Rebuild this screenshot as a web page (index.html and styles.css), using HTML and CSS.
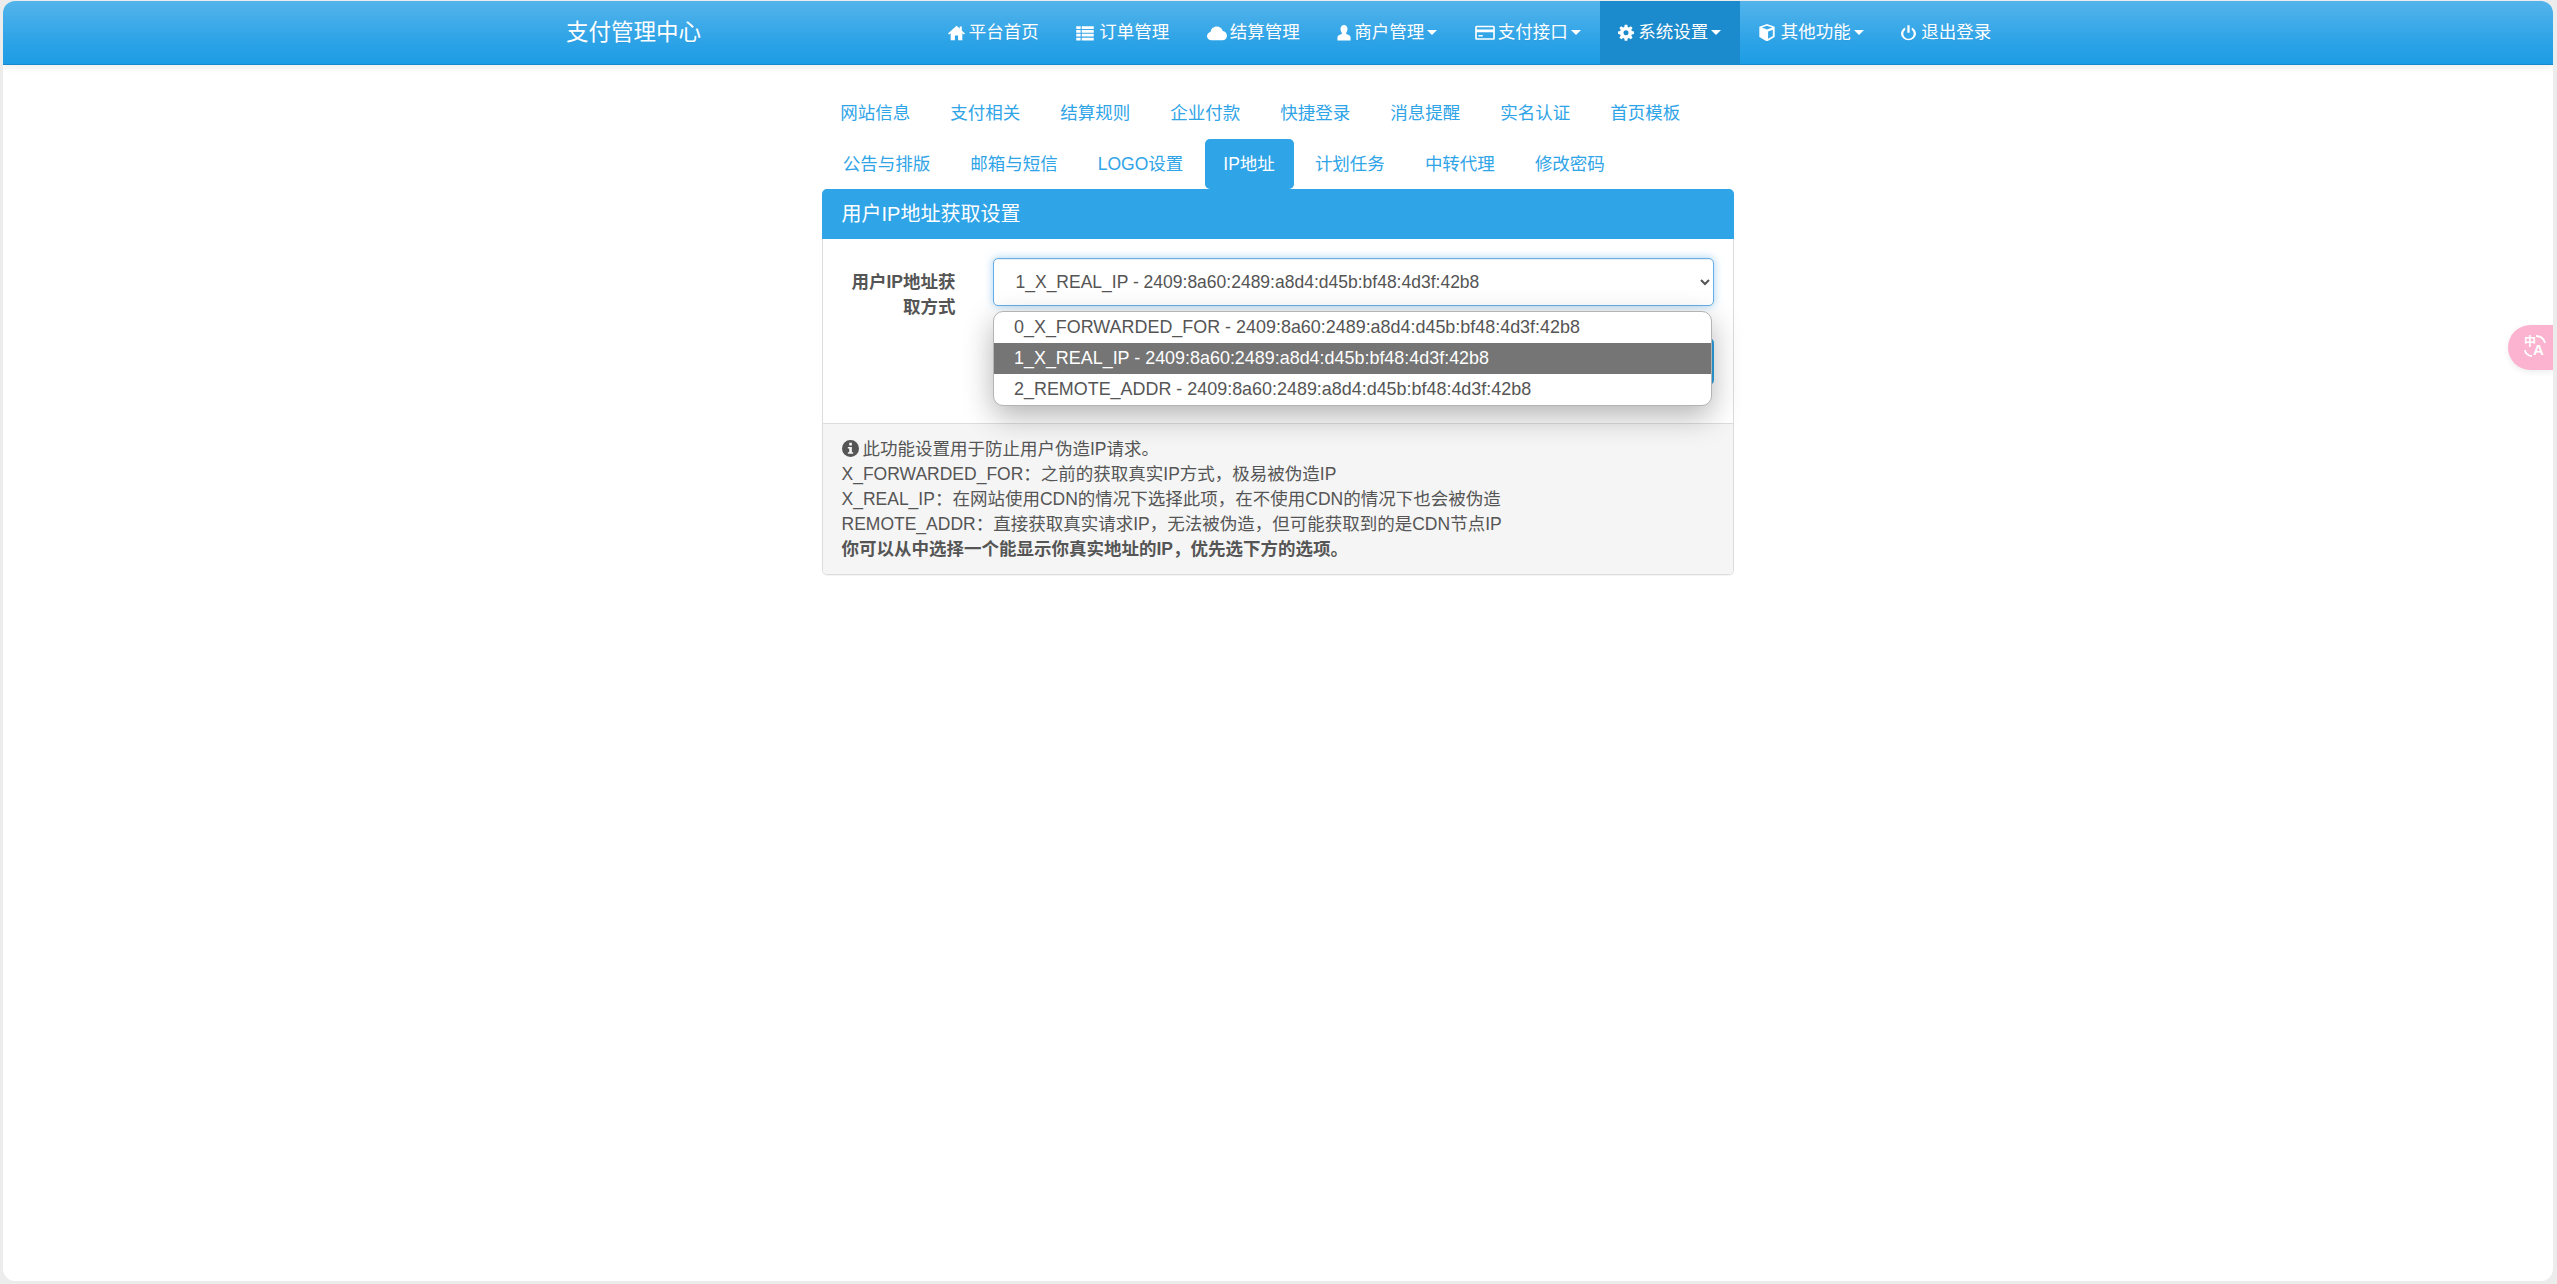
FILE: index.html
```html
<!DOCTYPE html>
<html lang="zh-CN">
<head>
    <meta charset="UTF-8">
    <title>支付管理中心</title>
    <link rel="stylesheet" href="styles.css">
</head>
<body>
    <div class="frame">
        <nav class="navbar">
            <a class="brand" href="#">支付管理中心</a>
            <ul class="nav">
                <li><a href="#"><svg class="ico ico-home" viewBox="0 0 16 16"><path d="M8 1.500 0 8.600l1 1.100L2.500 8.500V15h4v-4.500h3V15h4V8.500l1.500 1.200 1-1.100-3-2.700V2h-2v2.100z"/></svg>平台首页</a></li>
                <li><a href="#"><svg class="ico ico-list" viewBox="0 0 16 16"><path d="M0 2h4v2.500H0zM5 2h11v2.500H5zM0 5.500h4V8H0zM5 5.500h11V8H5zM0 9h4v2.500H0zM5 9h11v2.500H5zM0 12.500h4V15H0zM5 12.500h11V15H5z"/></svg>订单管理</a></li>
                <li><a href="#"><svg class="ico ico-cloud" viewBox="0 1 16 14"><path d="M3.500 14C1.500 14 0 12.500 0 10.600c0-1.700 1.200-3 2.800-3.300C3.100 4.800 5.200 3 7.800 3c2.300 0 4.200 1.400 4.800 3.500 1.900.2 3.400 1.800 3.400 3.800 0 2.100-1.600 3.700-3.700 3.700z"/></svg>结算管理</a></li>
                <li><a href="#"><svg class="ico ico-user" viewBox="0 0 12 16"><path d="M6 1c2 0 3.200 1.700 3.200 3.600 0 1.300-.5 2.500-1.200 3.300v1.300c1.800.6 4 1.500 4 2.900V15H0v-2.900c0-1.400 2.200-2.300 4-2.900V7.900c-.7-.8-1.200-2-1.200-3.300C2.800 2.700 4 1 6 1z"/></svg>商户管理<i class="caret"></i></a></li>
                <li><a href="#"><svg class="ico ico-card" viewBox="0 0 18 16"><path fill-rule="evenodd" d="M1.500 1.500h15c.8 0 1.500.7 1.500 1.500v10c0 .8-.7 1.500-1.500 1.500h-15C.7 14.500 0 13.800 0 13V3c0-.8.7-1.500 1.500-1.500zM1.500 3v2h15V3zm0 4.500V13h15V7.500zM3 10h4v1.500H3z"/></svg>支付接口<i class="caret"></i></a></li>
                <li class="active"><a href="#"><svg class="ico ico-cog" viewBox="0 0 16 16"><path fill-rule="evenodd" d="M6.700 0h2.600l.4 2.200 1.200.5 1.900-1.300 1.800 1.800-1.300 1.900.5 1.200 2.200.4v2.600l-2.200.4-.5 1.200 1.300 1.900-1.800 1.800-1.900-1.300-1.200.5-.4 2.200H6.700l-.4-2.200-1.200-.5-1.900 1.300-1.800-1.800 1.300-1.900-.5-1.200L0 9.300V6.700l2.200-.4.500-1.200-1.300-1.900 1.800-1.800 1.900 1.300 1.200-.5zM8 5.500a2.500 2.500 0 1 0 0 5 2.500 2.500 0 0 0 0-5z"/></svg>系统设置<i class="caret"></i></a></li>
                <li><a href="#"><svg class="ico ico-cube" viewBox="1 0 14 16"><path fill-rule="evenodd" d="M8 0l7 2.600v9.200L8 16l-7-4.200V2.600zM3.200 3.300 8 5.100l4.800-1.800L8 1.600zM9 6.800v6.700l4.300-2.600V5.200z"/></svg>其他功能<i class="caret"></i></a></li>
                <li><a href="#"><svg class="ico ico-power" viewBox="0 0 16 16"><path d="M6.800 0h2.400v8H6.800zM4.500 2.500v2.600C3.200 6 2.500 7.400 2.500 9a5.500 5.500 0 0 0 11 0c0-1.600-.7-3-2-3.900V2.500C14 3.600 16 6.100 16 9A8 7 0 0 1 0 9c0-2.900 2-5.400 4.500-6.500z"/></svg>退出登录</a></li>
            </ul>
        </nav>

        <main class="content">
            <ul class="pills">
                <li><a href="#">网站信息</a></li>
                <li><a href="#">支付相关</a></li>
                <li><a href="#">结算规则</a></li>
                <li><a href="#">企业付款</a></li>
                <li><a href="#">快捷登录</a></li>
                <li><a href="#">消息提醒</a></li>
                <li><a href="#">实名认证</a></li>
                <li><a href="#">首页模板</a></li>
                <li><a href="#">公告与排版</a></li>
                <li><a href="#">邮箱与短信</a></li>
                <li><a href="#">LOGO设置</a></li>
                <li class="active"><a href="#">IP地址</a></li>
                <li><a href="#">计划任务</a></li>
                <li><a href="#">中转代理</a></li>
                <li><a href="#">修改密码</a></li>
            </ul>

            <section class="panel">
                <h3 class="panel-heading">用户IP地址获取设置</h3>
                <div class="panel-body">
                    <form class="form-row">
                        <label class="form-label" for="ipType">用户IP地址获取方式</label>
                        <div class="form-field">
                            <select id="ipType" class="form-control">
                                <option>0_X_FORWARDED_FOR - 2409:8a60:2489:a8d4:d45b:bf48:4d3f:42b8</option>
                                <option selected>1_X_REAL_IP - 2409:8a60:2489:a8d4:d45b:bf48:4d3f:42b8</option>
                                <option>2_REMOTE_ADDR - 2409:8a60:2489:a8d4:d45b:bf48:4d3f:42b8</option>
                            </select>
                            <div class="btn-submit"></div>
                            <ul class="select-list">
                                <li>0_X_FORWARDED_FOR - 2409:8a60:2489:a8d4:d45b:bf48:4d3f:42b8</li>
                                <li class="selected">1_X_REAL_IP - 2409:8a60:2489:a8d4:d45b:bf48:4d3f:42b8</li>
                                <li>2_REMOTE_ADDR - 2409:8a60:2489:a8d4:d45b:bf48:4d3f:42b8</li>
                            </ul>
                        </div>
                    </form>
                </div>
                <div class="panel-footer">
                    <svg class="info-ico" viewBox="0 0 16 16"><path fill-rule="evenodd" d="M8 0a8 8 0 1 1 0 16A8 8 0 0 1 8 0zM6.800 2.500v2.600h2.500V2.500zM5.500 6.500v1.600h1.300v3.400H5.500V13h5v-1.500H9.300V6.500z"/></svg>此功能设置用于防止用户伪造IP请求。<br>
                    X_FORWARDED_FOR：之前的获取真实IP方式，极易被伪造IP<br>
                    X_REAL_IP：在网站使用CDN的情况下选择此项，在不使用CDN的情况下也会被伪造<br>
                    REMOTE_ADDR：直接获取真实请求IP，无法被伪造，但可能获取到的是CDN节点IP<br>
                    <b>你可以从中选择一个能显示你真实地址的IP，优先选下方的选项。</b>
                </div>
            </section>
        </main>

        <div class="translate-btn">
            <span class="translate-zh">中</span>
            <span class="translate-en">A</span>
            <svg class="translate-arc" viewBox="0 0 45 45"><path d="M28 11c5 0 8 3 9 7M17 25c0 3 3 6 7 6" fill="none" stroke="#fff" stroke-width="1.800"/></svg>
        </div>
    </div>
</body>
</html>
```

FILE: styles.css
```css
* {
    box-sizing: border-box;
}
html, body {
    height: 100%;
}
body {
    margin: 0;
    background-color: #ececec;
    font-family: "Liberation Sans", "Noto Sans CJK SC", sans-serif;
    font-size: 17.5px;
    line-height: 25px;
    color: #555;
}
a {
    text-decoration: none;
}
ul {
    list-style: none;
    margin: 0;
    padding: 0;
}
.frame {
    position: relative;
    height: 1280px;
    margin: 1px 4px 3px 3px;
    background-color: #fff;
    border-radius: 12px;
    overflow: hidden;
}
.navbar {
    display: flex;
    height: 64px;
    padding-left: 544px;
    background-image: linear-gradient(#54b4eb, #2fa4e7 60%, #1d9ce5);
    border-bottom: 1px solid #178acc;
    box-shadow: 0 2px 8px rgba(0, 0, 0, 0.08);
}
.brand {
    width: 382px;
    padding-left: 19px;
    font-size: 22.5px;
    line-height: 63px;
    color: #fff;
    text-shadow: 0 1px 0 rgba(0, 0, 0, 0.05);
}
.nav {
    display: flex;
}
.nav a {
    display: flex;
    align-items: center;
    height: 63px;
    padding: 0 18.75px;
    color: #fff;
    text-shadow: 0 1px 0 rgba(0, 0, 0, 0.05);
}
.nav .active a {
    background-color: #1b8bcd;
}
.ico {
    height: 17.5px;
    fill: #fff;
}
.ico-home {
    width: 17px;
    margin-right: 4px;
}
.ico-list {
    width: 18px;
    margin-right: 5px;
}
.ico-cloud {
    width: 20px;
    margin-right: 3px;
}
.ico-user {
    width: 14px;
    margin-right: 3px;
}
.ico-card {
    width: 20px;
    margin-right: 3px;
}
.ico-cog {
    width: 16px;
    margin-right: 4px;
}
.ico-cube {
    width: 16px;
    margin-right: 6px;
}
.ico-power {
    width: 15px;
    margin-right: 5px;
}
.caret {
    width: 0;
    height: 0;
    margin-left: 3px;
    border-top: 5px solid #fff;
    border-left: 5px solid transparent;
    border-right: 5px solid transparent;
}
.content {
    width: 912.5px;
    margin: 23px auto 0 818.5px;
}
.pills {
    display: flex;
    flex-wrap: wrap;
    row-gap: 1px;
}
.pills li + li {
    margin-left: 2.5px;
}
.pills a {
    display: block;
    padding: 12.5px 18.75px;
    border-radius: 5px;
    color: #2fa4e7;
}
.pills .active a {
    background-color: #2fa4e7;
    color: #fff;
}
.panel {
    border: 1px solid #ddd;
    border-radius: 5px;
    box-shadow: 0 1px 1px rgba(0, 0, 0, 0.05);
}
.panel-heading {
    height: 50px;
    margin: -1px -1px 0;
    padding: 13px 20px 0;
    background-color: #2fa4e7;
    border-radius: 5px 5px 0 0;
    font-size: 20px;
    font-weight: 400;
    color: #fff;
}
.panel-body {
    height: 184px;
    padding: 19px 18px;
}
.form-row {
    display: flex;
}
.form-label {
    flex-shrink: 0;
    width: 105px;
    margin: 12px 37px 0 10px;
    text-align: right;
    font-weight: 700;
}
.form-field {
    position: relative;
    flex-shrink: 0;
    width: 721px;
}
.form-control {
    display: block;
    width: 100%;
    height: 48px;
    padding: 0 18px;
    background-color: #fff;
    border: 1px solid #66afe9;
    border-radius: 5px;
    box-shadow: inset 0 1px 1px rgba(0, 0, 0, 0.08), 0 0 8px rgba(102, 175, 233, 0.6);
    outline: none;
    font-family: inherit;
    font-size: 17.5px;
    color: #555;
}
.btn-submit {
    height: 47px;
    margin-top: 32px;
    background-color: #2fa4e7;
    border-radius: 5px;
}
.select-list {
    position: absolute;
    top: 53px;
    left: 0;
    width: 719.5px;
    background-color: #fff;
    border: 1px solid #b4b4b4;
    border-radius: 10px;
    box-shadow: 0 10px 30px rgba(0, 0, 0, 0.3);
    font-size: 17.93px;
    overflow: hidden;
}
.select-list li {
    height: 31px;
    padding-left: 20.5px;
    line-height: 30px;
}
.select-list .selected {
    background-color: #757575;
    color: #fff;
}
.panel-footer {
    height: 151px;
    padding: 13px 19px;
    background-color: #f5f5f5;
    border-top: 1px solid #ddd;
    border-radius: 0 0 5px 5px;
}
.info-ico {
    width: 17px;
    height: 17px;
    margin-right: 4px;
    vertical-align: -2px;
    fill: #555;
}
.translate-btn {
    position: absolute;
    top: 324px;
    right: 0;
    width: 45px;
    height: 45px;
    background-color: #fbb3d0;
    border-radius: 23px 0 0 23px;
    box-shadow: 0 2px 6px rgba(0, 0, 0, 0.08);
    color: #fff;
}
.translate-zh {
    position: absolute;
    top: 11px;
    left: 16px;
    font-size: 12px;
    line-height: 13px;
    font-weight: 700;
}
.translate-en {
    position: absolute;
    top: 17px;
    left: 25px;
    font-size: 15px;
    line-height: 16px;
    font-weight: 700;
}
.translate-arc {
    position: absolute;
    top: 0;
    left: 0;
    width: 45px;
    height: 45px;
}
```
